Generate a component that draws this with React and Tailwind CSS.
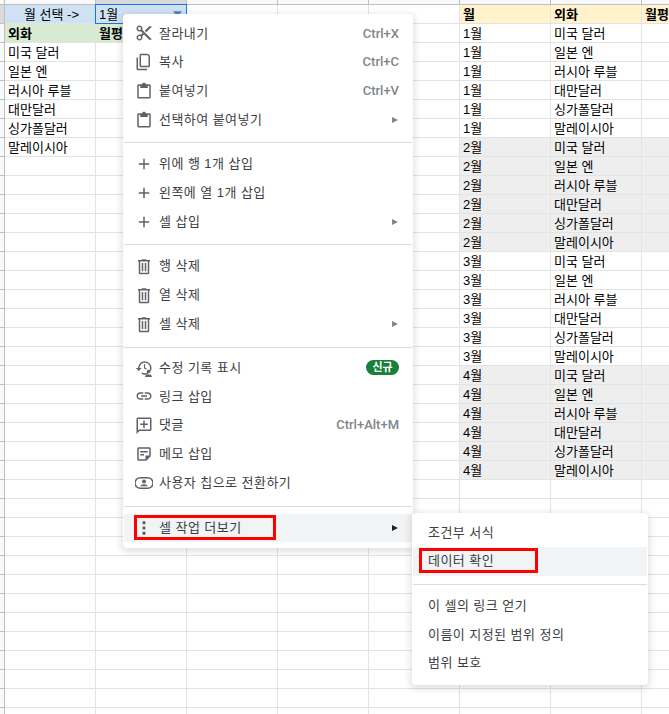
import React from "react";

const CW = "w-[91px] shrink-0";
const FONT = { fontFamily: '"Liberation Sans","Noto Sans CJK KR",sans-serif' };

const currencies = ["미국 달러", "일본 엔", "러시아 루블", "대만달러", "싱가폴달러", "말레이시아"];
const months = ["1월", "2월", "3월", "4월"];

function Cell({ children, className = "", bold = false }) {
  return (
    <div
      className={`${CW} h-full border-r border-b border-[#e2e3e3] pl-[3px] pt-[1px] overflow-hidden whitespace-nowrap text-[13px] leading-[18px] text-black ${bold ? "font-bold" : ""} ${className}`}
    >
      {children}
    </div>
  );
}

function Row({ index }) {
  let a = "", b = "", aCls = "", bCls = "", aBold = false;
  if (index === 0) { a = "월 선택 ->"; b = "1월"; aCls = "bg-[#cfe2f3] text-center"; bCls = "bg-[#cfe2f3]"; }
  if (index === 1) { a = "외화"; b = "월평"; aCls = "bg-[#d9ead3]"; bCls = "bg-[#d9ead3]"; aBold = true; }
  if (index >= 2 && index <= 7) a = currencies[index - 2];

  let m = "", c = "", gray = false, hd = false;
  if (index === 0) { m = "월"; c = "외화"; hd = true; }
  else if (index <= 24) {
    const mi = Math.floor((index - 1) / 6);
    m = months[mi];
    c = currencies[(index - 1) % 6];
    gray = mi % 2 === 1;
  }
  const rc = hd ? "bg-[#fff2cc] font-bold" : gray ? "bg-[#eeeeee] border-[#d9d9d9]" : "";
  return (
    <div className="flex h-[19px] shrink-0">
      <div className={`w-[5px] shrink-0 border-r border-b border-[#c0c0c0] ${index === 0 ? "bg-[#d9dadb]" : "bg-[#f8f9fa]"}`} />
      <Cell className={aCls} bold={aBold}>{a}</Cell>
      <Cell className={bCls} bold={index === 1}>{b}</Cell>
      <Cell />
      <Cell />
      <Cell />
      <Cell className={rc}>{m}</Cell>
      <Cell className={rc}>{c}</Cell>
      <Cell className={rc}>{index === 0 ? "월평" : ""}</Cell>
    </div>
  );
}

function HeaderStrip() {
  const cell = "w-[91px] shrink-0 border-r border-b border-[#c0c0c0]";
  return (
    <div className="flex h-[5px]">
      <div className="w-[5px] shrink-0 bg-[#f8f9fa] border-r border-b border-[#c0c0c0]" />
      <div className={`${cell} bg-[#f8f9fa]`} />
      <div className={`${cell} bg-[#d9dadb]`} />
      <div className={`${cell} bg-[#f8f9fa]`} />
      <div className={`${cell} bg-[#f8f9fa]`} />
      <div className={`${cell} bg-[#f8f9fa]`} />
      <div className={`${cell} bg-[#f8f9fa]`} />
      <div className={`${cell} bg-[#f8f9fa]`} />
      <div className={`${cell} bg-[#f8f9fa]`} />
    </div>
  );
}

const stroke = "#5f6368";
const Ic = ({ children }) => (
  <svg width="18" height="18" viewBox="0 0 24 24" fill={stroke} className="shrink-0">{children}</svg>
);
const icons = {
  cut: <Ic><path d="M9.64 7.64c.23-.5.36-1.05.36-1.64 0-2.21-1.79-4-4-4S2 3.79 2 6s1.79 4 4 4c.59 0 1.14-.13 1.64-.36L10 12l-2.36 2.36C7.14 14.13 6.59 14 6 14c-2.21 0-4 1.79-4 4s1.79 4 4 4 4-1.79 4-4c0-.59-.13-1.14-.36-1.64L12 14l7 7h3v-1L9.64 7.64zM6 8c-1.1 0-2-.89-2-2s.9-2 2-2 2 .89 2 2-.9 2-2 2zm0 12c-1.1 0-2-.89-2-2s.9-2 2-2 2 .89 2 2-.9 2-2 2zm6-7.5c-.28 0-.5-.22-.5-.5s.22-.5.5-.5.5.22.5.5-.22.5-.5.5zM19 3l-6 6 2 2 7-7V3h-3z" /></Ic>,
  copy: <Ic><path d="M16 1H8C6.9 1 6 1.9 6 3v14c0 1.1.9 2 2 2h10c1.1 0 2-.9 2-2V5c0-2.2-1.8-4-4-4zm2 16H8V3h8c1.1 0 2 .9 2 2v12zM4 6H2v15c0 1.1.9 2 2 2h12v-2H4V6z" /></Ic>,
  paste: <Ic><path d="M19 3h-4.18C14.4 1.84 13.3 1 12 1s-2.4.84-2.82 2H5c-1.1 0-2 .9-2 2v15c0 1.1.9 2 2 2h14c1.1 0 2-.9 2-2V5c0-1.1-.9-2-2-2zm0 17H5V5h2v3h10V5h2v15z" /></Ic>,
  plus: <Ic><path d="M19 13h-6v6h-2v-6H5v-2h6V5h2v6h6v2z" /></Ic>,
  trash: <Ic><path d="M15 4V3H9v1H4v2h1v15c0 1.1.9 2 2 2h10c1.1 0 2-.9 2-2V6h1V4h-5zm2 17H7V6h10v15zM9 8h2v11H9V8zm4 0h2v11h-2V8z" /></Ic>,
  history: <Ic><path d="M13 3a9 9 0 0 0-9 9H1l3.9 3.9L9 12H6a7 7 0 1 1 3.5 6.06l-1 1.73A9 9 0 1 0 13 3z" /><path d="M12 7v5.4l3 1.8.8-1.2-2.3-1.4V7z" /><circle cx="18" cy="16.5" r="2.3" /><path d="M13.5 23c0-1.9 3-2.8 4.5-2.8s4.5.9 4.5 2.8v1h-9z" /></Ic>,
  link: <Ic><path d="M3.9 12c0-1.71 1.39-3.1 3.1-3.1h4V7H7c-2.76 0-5 2.24-5 5s2.24 5 5 5h4v-1.9H7c-1.71 0-3.1-1.39-3.1-3.1zM8 13h8v-2H8v2zm9-6h-4v1.9h4c1.71 0 3.1 1.39 3.1 3.1s-1.39 3.1-3.1 3.1h-4V17h4c2.76 0 5-2.24 5-5s-2.24-5-5-5z" /></Ic>,
  comment: <Ic><path d="M20 2H4c-1.1 0-2 .9-2 2v20l4-4h14c1.1 0 2-.9 2-2V4c0-1.1-.9-2-2-2zm0 16H5.2L4 19.2V4h16v14zM13 6h-2v4H7v2h4v4h2v-4h4v-2h-4V6z" /></Ic>,
  note: <Ic><path d="M19 3H5c-1.1 0-2 .9-2 2v14c0 1.1.9 2 2 2h10l6-6V5c0-1.1-.9-2-2-2zM5 19V5h14v9h-5v5H5zm2-11h10v2H7V8zm0 4h5v2H7v-2z" /></Ic>,
  chip: <Ic><path d="M17 4H7a8 8 0 0 0 0 16h10a8 8 0 0 0 0-16zm0 14H7A6 6 0 0 1 7 6h10a6 6 0 0 1 0 12z" /><circle cx="12" cy="10" r="2.6" /><path d="M7 16.4c.5-1.7 3.2-2.6 5-2.6s4.5.9 5 2.6z" /></Ic>,
  more: <Ic><circle cx="12" cy="5" r="2.2" /><circle cx="12" cy="12" r="2.2" /><circle cx="12" cy="19" r="2.2" /></Ic>,
};

function Arrow({ dark }) {
  return (
    <svg width="8" height="8" viewBox="0 0 8 8" className="shrink-0">
      <path d="M1 1l6 3-6 3z" fill={dark ? "#202124" : "#80868b"} />
    </svg>
  );
}

function Item({ icon, label, shortcut, sub, badge, active }) {
  return (
    <div className={`flex items-center h-[28.8px] pl-[11px] pr-[13px] ${active ? "bg-[#f1f3f4]" : ""}`}>
      <span className="w-[26px] flex items-center">{icons[icon]}</span>
      <span className="ml-[-2px] flex-1 text-[13px] text-[#3c4043] tracking-[0.45px] whitespace-nowrap">{label}</span>
      {shortcut && <span className="font-['Roboto'] text-[13px] font-medium text-[#80868b]">{shortcut}</span>}
      {sub && <Arrow dark={active} />}
      {badge && (
        <span className="w-[33px] h-[15px] rounded-full bg-[#188038] text-white text-[11px] leading-[15px] text-center font-bold">{badge}</span>
      )}
    </div>
  );
}

const Sep = ({ className }) => <div className={`h-px bg-[#dadce0] ${className}`} />;

function SubItem({ label, active }) {
  return (
    <div className={`flex items-center h-[28.8px] pl-[15px] ${active ? "bg-[#f1f3f4]" : ""}`}>
      <span className="text-[13px] text-[#3c4043] tracking-[0.45px] whitespace-nowrap">{label}</span>
    </div>
  );
}

export default function App() {
  return (
    <div className="relative w-[669px] h-[714px] overflow-hidden bg-white" style={FONT}>
      <HeaderStrip />
      <div className="flex flex-col">
        {Array.from({ length: 38 }, (_, i) => <Row key={i} index={i} />)}
      </div>

      {/* selected cell */}
      <div className="absolute left-[95px] top-[4px] w-[92px] h-[20px] border-[1.5px] border-[#1a73e8]">
        <svg width="9" height="6" viewBox="0 0 10 6" className="absolute right-[4px] top-[6px]">
          <path d="M0 0h10L5 6z" fill="#4a7fc1" />
        </svg>
      </div>

      {/* main menu */}
      <div className="absolute left-[123px] top-[14px] w-[290px] h-[534px] bg-white rounded-[4px] pt-[5px] px-[1px] shadow-[0_2px_6px_2px_rgba(60,64,67,0.15)]">
        <Item icon="cut" label="잘라내기" shortcut="Ctrl+X" />
        <Item icon="copy" label="복사" shortcut="Ctrl+C" />
        <Item icon="paste" label="붙여넣기" shortcut="Ctrl+V" />
        <Item icon="paste" label="선택하여 붙여넣기" sub />
        <Sep className="mt-[8px] mb-[6.6px]" />
        <Item icon="plus" label="위에 행 1개 삽입" />
        <Item icon="plus" label="왼쪽에 열 1개 삽입" />
        <Item icon="plus" label="셀 삽입" sub />
        <Sep className="mt-[8px] mb-[6.6px]" />
        <Item icon="trash" label="행 삭제" />
        <Item icon="trash" label="열 삭제" />
        <Item icon="trash" label="셀 삭제" sub />
        <Sep className="mt-[8.5px] mb-[5.5px]" />
        <Item icon="history" label="수정 기록 표시" badge="신규" />
        <Item icon="link" label="링크 삽입" />
        <Item icon="comment" label="댓글" shortcut="Ctrl+Alt+M" />
        <Item icon="note" label="메모 삽입" />
        <Item icon="chip" label="사용자 칩으로 전환하기" />
        <Sep className="mt-[8.5px] mb-[7px]" />
        <Item icon="more" label="셀 작업 더보기" sub active />
      </div>

      {/* red box on main menu */}
      <div className="absolute left-[134px] top-[515px] w-[142px] h-[25px] border-[3px] border-[#ff0000]" />

      {/* sub menu */}
      <div className="absolute left-[412px] top-[513px] w-[236px] h-[172px] bg-white rounded-[4px] pt-[5px] px-[1px] shadow-[0_2px_6px_2px_rgba(60,64,67,0.15)]">
        <SubItem label="조건부 서식" />
        <SubItem label="데이터 확인" active />
        <Sep className="mt-[8px] mb-[6.6px]" />
        <SubItem label="이 셀의 링크 얻기" />
        <SubItem label="이름이 지정된 범위 정의" />
        <SubItem label="범위 보호" />
      </div>
      <div className="absolute left-[419px] top-[548px] w-[119px] h-[25px] border-[3px] border-[#ff0000]" />
    </div>
  );
}
